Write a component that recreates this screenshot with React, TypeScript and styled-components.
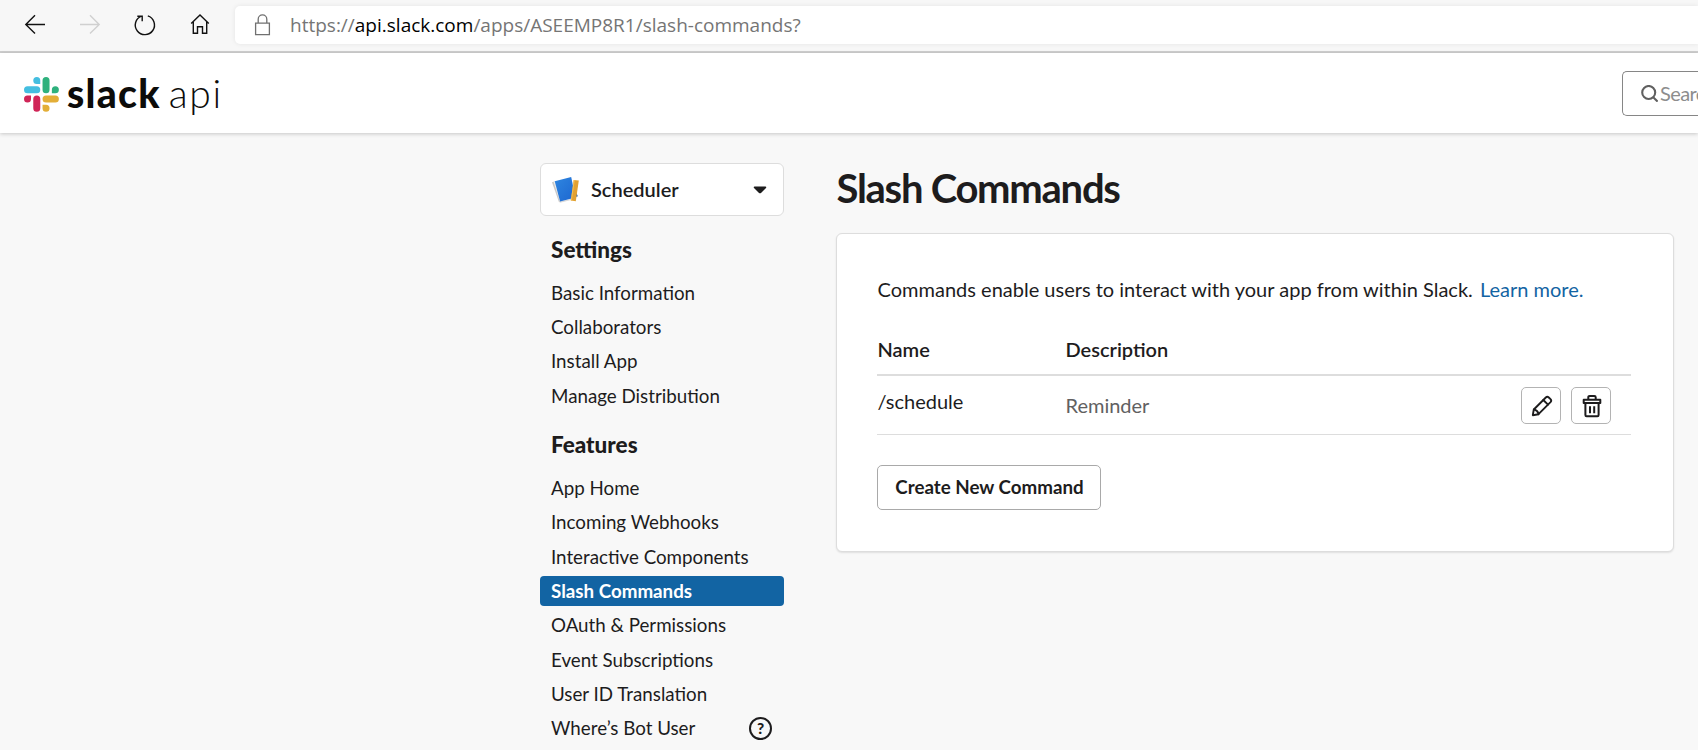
import React from 'react';
import styled, { createGlobalStyle } from 'styled-components';

const GlobalStyle = createGlobalStyle`
  * { box-sizing: border-box; }
  body {
    margin: 0;
    background: #f8f8f8;
    color: #1d1c1d;
    font-family: Lato, 'Liberation Sans', sans-serif;
    overflow: hidden;
  }
  h1, h2, p, ul { margin: 0; padding: 0; }
  svg { display: block; flex: none; }
`;

const Page = styled.div`
  height: 750px;
  overflow: hidden;
`;

const BrowserBar = styled.div`
  height: 53px;
  display: flex;
  align-items: flex-start;
  background: #f7f7f7;
  border-bottom: 2px solid #cfcfcf;
`;

const NavIcons = styled.div`
  display: flex;
  gap: 31px;
  width: 235px;
  flex: none;
  padding: 12px 0 0 23px;
`;

const AddressBox = styled.div`
  flex: 1;
  height: 38px;
  margin-top: 6px;
  padding-left: 19px;
  display: flex;
  align-items: center;
  gap: 19px;
  background: #fff;
  border-radius: 5px 0 0 5px;
  box-shadow: 0 0 5px rgba(0, 0, 0, 0.08);
`;

const Url = styled.div`
  font: 400 19px/36px 'Open Sans', sans-serif;
  color: #757575;
  white-space: nowrap;
  strong { font-weight: 400; color: #000; }
`;

const SiteHeader = styled.header`
  height: 80px;
  padding: 0 0 0 24px;
  display: flex;
  justify-content: space-between;
  align-items: flex-start;
  background: #fff;
  box-shadow: 0 1px 4px rgba(0, 0, 0, 0.2);
`;

const Brand = styled.div`
  display: flex;
  padding-top: 24px;
`;

const Wordmark = styled.div`
  display: flex;
  margin: -7px 0 0 8px;
  line-height: 46px;
  font-size: 39px;
  color: #0c0c0a;
`;

const BrandName = styled.span`
  font-weight: 900;
  letter-spacing: 1.3px;
`;

const BrandSuffix = styled.span`
  font-weight: 300;
  letter-spacing: 1.6px;
  margin-left: 8px;
`;

const SearchBox = styled.div`
  width: 76px;
  height: 45px;
  margin-top: 18px;
  padding: 0 0 1px 18px;
  display: flex;
  align-items: center;
  gap: 2px;
  border: 1px solid #868686;
  border-right: 0;
  border-radius: 5px 0 0 5px;
  overflow: hidden;
  font-size: 20px;
  line-height: 24px;
  letter-spacing: -0.6px;
  color: #8d8d8d;
`;

const Body = styled.div`
  display: flex;
  align-items: flex-start;
  gap: 52px;
  padding: 30px 0 0 540px;
`;

const Sidebar = styled.nav`
  width: 244px;
  flex: none;
`;

const AppPicker = styled.div`
  height: 53px;
  display: flex;
  align-items: center;
  padding: 0 16px 0 11px;
  background: #fff;
  border: 1px solid #dddddd;
  border-radius: 6px;
`;

const AppName = styled.span`
  flex: 1;
  margin-left: 11px;
  padding-bottom: 2px;
  font-size: 20px;
  font-weight: 600;
  line-height: 28px;
`;

const NavTitle = styled.h2`
  height: 30px;
  margin: 19px 0 13px;
  padding-left: 11px;
  font-size: 22.5px;
  font-weight: 900;
  line-height: 30px;
`;

const NavList = styled.ul<{ $gap: number }>`
  display: flex;
  flex-direction: column;
  gap: ${(p) => p.$gap}px;
  && { padding-bottom: 0.6px; }
  list-style: none;
`;

const NavItem = styled.li<{ $active?: boolean }>`
  height: 30px;
  padding: 0 12px 0 11px;
  display: flex;
  justify-content: space-between;
  align-items: center;
  border-radius: 4px;
  font-size: 18.75px;
  line-height: 30px;
  white-space: nowrap;
  font-weight: ${(p) => (p.$active ? 700 : 400)};
  color: ${(p) => (p.$active ? '#fff' : '#1d1c1d')};
  background: ${(p) => (p.$active ? '#1264a3' : 'transparent')};
`;

const Main = styled.main`
  width: 838px;
`;

const PageTitle = styled.h1`
  padding-left: 0.5px;
  font-size: 40px;
  font-weight: 700;
  line-height: 50px;
  letter-spacing: -1.27px;
  margin-bottom: 20px;
`;

const Card = styled.section`
  height: 319px;
  padding: 40px 42px 0 40px;
  background: #fff;
  border: 1px solid #dddddd;
  border-radius: 6px;
  box-shadow: 0 1px 2px rgba(0, 0, 0, 0.1);
`;

const Intro = styled.p`
  padding-left: 0.6px;
  font-size: 20px;
  line-height: 30px;
  white-space: nowrap;
`;

const Link = styled.a`
  margin-left: 2px;
  color: #1264a3;
`;

const TableHead = styled.div`
  display: grid;
  grid-template-columns: 188px 1fr;
  height: 43px;
  margin-top: 29px;
  padding: 1px 0 0 0.5px;
  border-bottom: 2px solid #dddddd;
  font-size: 20px;
  font-weight: 600;
  line-height: 30px;
`;

const CommandRow = styled.div`
  display: grid;
  grid-template-columns: 188px 1fr auto;
  align-items: center;
  height: 59px;
  padding: 0 20px 0 0;
  border-bottom: 1px solid #dddddd;
  font-size: 20px;
`;

const CommandName = styled.span`
  line-height: 30px;
  padding: 0 0 9px 0.5px;
`;

const CommandDescription = styled.span`
  line-height: 30px;
  padding: 0 0 0 0.5px;
  color: #616061;
`;

const Actions = styled.div`
  display: flex;
  gap: 10px;
  padding-top: 1px;
`;

const IconButton = styled.button`
  width: 40px;
  height: 37px;
  padding: 0 0 0 1px;
  display: flex;
  align-items: center;
  justify-content: center;
  background: #fff;
  border: 1px solid #b3b3b3;
  border-radius: 5px;
`;

const CreateButton = styled.button`
  width: 224px;
  height: 45px;
  margin-top: 30px;
  padding: 0 0 2px 1px;
  background: #fff;
  border: 1px solid #a9a9a9;
  border-radius: 5px;
  color: #1d1c1d;
  font: 700 18.75px/28px Lato, sans-serif;
`;

const BackIcon = () => (
  <svg width="24" height="24" viewBox="0 0 24 24" fill="none" stroke="#111" strokeWidth="1.4">
    <path d="M22 12.5H3M12 3.2L2.8 12.5l9.2 9" />
  </svg>
);

const ForwardIcon = () => (
  <svg width="24" height="24" viewBox="0 0 24 24" fill="none" stroke="#d0d0d0" strokeWidth="1.4">
    <path d="M2 12.5h19M12 3.2l9.2 9.3-9.2 9" />
  </svg>
);

const ReloadIcon = () => (
  <svg width="24" height="24" viewBox="0 0 24 24" fill="none" stroke="#111" strokeWidth="1.4">
    <path d="M14.8 3.9a9.6 9.6 0 1 1-6.400.2M4.300 4.200h4.900v5" />
  </svg>
);

const HomeIcon = () => (
  <svg width="24" height="24" viewBox="0 0 24 24" fill="none" stroke="#111" strokeWidth="1.4">
    <path d="M3.2 11.6L12 3l8.8 8.6M5.3 9.8v11.5h4.2v-6.5h5v6.5h4.2V9.8" />
  </svg>
);

const LockIcon = () => (
  <svg width="17" height="22" viewBox="0 0 17 22" fill="none" stroke="#707070" strokeWidth="1.3">
    <path d="M1.6 9.2h13.8v11.4H1.6zM4.2 9V5.2a4.3 4.3 0 0 1 8.6 0V9" />
  </svg>
);

const SlackMark = () => (
  <svg width="35" height="35" viewBox="0 0 54 54">
    <path fill="#44bee0" d="M19.7.1a5.4 5.4 0 0 0-5.4 5.4 5.4 5.4 0 0 0 5.4 5.4h5.4V5.5A5.4 5.4 0 0 0 19.7.1m0 14.3H5.4A5.4 5.4 0 0 0 0 19.8a5.4 5.4 0 0 0 5.4 5.4h14.3a5.4 5.4 0 0 0 5.4-5.4 5.4 5.4 0 0 0-5.4-5.4" />
    <path fill="#2eb17d" d="M53.8 19.8a5.4 5.4 0 0 0-5.4-5.4 5.4 5.4 0 0 0-5.4 5.4v5.4h5.4a5.4 5.4 0 0 0 5.4-5.4m-14.4 0V5.5A5.4 5.4 0 0 0 34 .1a5.4 5.4 0 0 0-5.4 5.4v14.3a5.4 5.4 0 0 0 5.4 5.4 5.4 5.4 0 0 0 5.4-5.4" />
    <path fill="#e3ae37" d="M34 53.8a5.4 5.4 0 0 0 5.4-5.4A5.4 5.4 0 0 0 34 43h-5.4v5.4a5.4 5.4 0 0 0 5.4 5.4m0-14.3h14.4a5.4 5.4 0 0 0 5.4-5.4 5.4 5.4 0 0 0-5.4-5.4H34a5.4 5.4 0 0 0-5.4 5.4 5.4 5.4 0 0 0 5.4 5.4" />
    <path fill="#d02557" d="M0 34.1a5.4 5.4 0 0 0 5.4 5.4 5.4 5.4 0 0 0 5.4-5.4v-5.4H5.4A5.4 5.4 0 0 0 0 34.1m14.3 0v14.3a5.4 5.4 0 0 0 5.4 5.4 5.4 5.4 0 0 0 5.4-5.4V34.1a5.4 5.4 0 0 0-5.4-5.4 5.4 5.4 0 0 0-5.4 5.4" />
  </svg>
);

const SearchIcon = () => (
  <svg width="17" height="17" viewBox="0 0 17 17" fill="none" stroke="#606060" strokeWidth="2.1">
    <circle cx="7.7" cy="7.5" r="6.5" />
    <path d="M12.2 12.2l4.4 4.4" />
  </svg>
);

const SchedulerIcon = () => (
  <svg width="28" height="28" viewBox="0 0 28 28">
    <defs>
      <linearGradient id="cover" x1="0" y1="0" x2="1" y2="1">
        <stop offset="0" stopColor="#2f86e0" />
        <stop offset="1" stopColor="#1c66d0" />
      </linearGradient>
    </defs>
    <path d="M0 6.2l2.4-.7 6.6 20.2-2 .6z" fill="#c9c9c9" />
    <path d="M1.6 5.8l1.8-.6 5.8 20-1.2.5z" fill="#f1f1f1" />
    <path d="M7.6 25.6l15-3.6.6.9-15.2 3.9z" fill="#d9d9d9" />
    <path d="M22.5 13l3.4 7.3-4 1.3z" fill="#1b5fc0" />
    <path d="M2.7 5.3L19.2.9l4.2 20.6-15.3 4z" fill="url(#cover)" />
    <path d="M21.7 3.9l5.1.6-3 20.8-5-.7z" fill="#e2a131" />
    <path d="M21.7 3.9l1.1.1-3 20.7-1-.1z" fill="#f0bd57" />
  </svg>
);

const CaretIcon = () => (
  <svg width="14" height="8" viewBox="0 0 14 8">
    <path d="M1.6.6h10.8c.8 0 1.2.9.6 1.5L8 6.9c-.6.5-1.4.5-2 0L1 2.1C.4 1.5.8.6 1.6.6z" fill="#1d1c1d" />
  </svg>
);

const HelpBadge = styled.span`
  width: 23px;
  height: 23px;
  display: flex;
  align-items: center;
  justify-content: center;
  border: 2px solid #1d1c1d;
  border-radius: 50%;
  font-size: 15.5px;
  font-weight: 900;
  line-height: 19px;
`;

const PencilIcon = () => (
  <svg width="22" height="22" viewBox="0 0 22 22" fill="none" stroke="#1d1c1d" strokeWidth="1.9" strokeLinejoin="round" strokeLinecap="round">
    <path d="M1.8 20.2L2.8 14.5L14.8 2.5q1.5-1.4 3 0l1.7 1.7q1.4 1.5 0 3L7.5 19.2z" />
    <path d="M12.3 5l4.7 4.7M2.9 14.5q3.8.7 4.6 4.7" />
  </svg>
);

const TrashIcon = () => (
  <svg width="20" height="24" viewBox="0 0 20 24" fill="none" stroke="#1d1c1d" strokeWidth="2" strokeLinejoin="round">
    <path d="M1.7 5.8h16.600v3.200H1.700zM6.300 5.600V3.300q0-1.400 1.400-1.400h4.600q1.400 0 1.400 1.400v2.300" />
    <path d="M3.400 9.200v11.900q0 1.200 1.200 1.200h10.800q1.200 0 1.200-1.200V9.200M8 12.200v7M12.200 12.200v7" />
  </svg>
);

type Entry = { label: string; active?: boolean; help?: boolean };

const groups: { title: string; gap: number; entries: Entry[] }[] = [
  {
    title: 'Settings',
    gap: 4.2,
    entries: [
      { label: 'Basic Information' },
      { label: 'Collaborators' },
      { label: 'Install App' },
      { label: 'Manage Distribution' },
    ],
  },
  {
    title: 'Features',
    gap: 4.3,
    entries: [
      { label: 'App Home' },
      { label: 'Incoming Webhooks' },
      { label: 'Interactive Components' },
      { label: 'Slash Commands', active: true },
      { label: 'OAuth & Permissions' },
      { label: 'Event Subscriptions' },
      { label: 'User ID Translation' },
      { label: 'Where’s Bot User', help: true },
    ],
  },
];

export default function App() {
  return (
    <Page>
      <GlobalStyle />
      <BrowserBar>
        <NavIcons>
          <BackIcon />
          <ForwardIcon />
          <ReloadIcon />
          <HomeIcon />
        </NavIcons>
        <AddressBox>
          <LockIcon />
          <Url>
            https://<strong>api.slack.com</strong>/apps/ASEEMP8R1/slash-commands?
          </Url>
        </AddressBox>
      </BrowserBar>
      <SiteHeader>
        <Brand>
          <SlackMark />
          <Wordmark>
            <BrandName>slack</BrandName>
            <BrandSuffix>api</BrandSuffix>
          </Wordmark>
        </Brand>
        <SearchBox>
          <SearchIcon />
          <span>Search</span>
        </SearchBox>
      </SiteHeader>
      <Body>
        <Sidebar>
          <AppPicker>
            <SchedulerIcon />
            <AppName>Scheduler</AppName>
            <CaretIcon />
          </AppPicker>
          {groups.map((group) => (
            <React.Fragment key={group.title}>
              <NavTitle>{group.title}</NavTitle>
              <NavList $gap={group.gap}>
                {group.entries.map((entry) => (
                  <NavItem key={entry.label} $active={entry.active}>
                    {entry.label}
                    {entry.help && <HelpBadge>?</HelpBadge>}
                  </NavItem>
                ))}
              </NavList>
            </React.Fragment>
          ))}
        </Sidebar>
        <Main>
          <PageTitle>Slash Commands</PageTitle>
          <Card>
            <Intro>
              Commands enable users to interact with your app from within Slack. <Link>Learn more.</Link>
            </Intro>
            <TableHead>
              <span>Name</span>
              <span>Description</span>
            </TableHead>
            <CommandRow>
              <CommandName>/schedule</CommandName>
              <CommandDescription>Reminder</CommandDescription>
              <Actions>
                <IconButton aria-label="Edit">
                  <PencilIcon />
                </IconButton>
                <IconButton aria-label="Delete">
                  <TrashIcon />
                </IconButton>
              </Actions>
            </CommandRow>
            <CreateButton>Create New Command</CreateButton>
          </Card>
        </Main>
      </Body>
    </Page>
  );
}
